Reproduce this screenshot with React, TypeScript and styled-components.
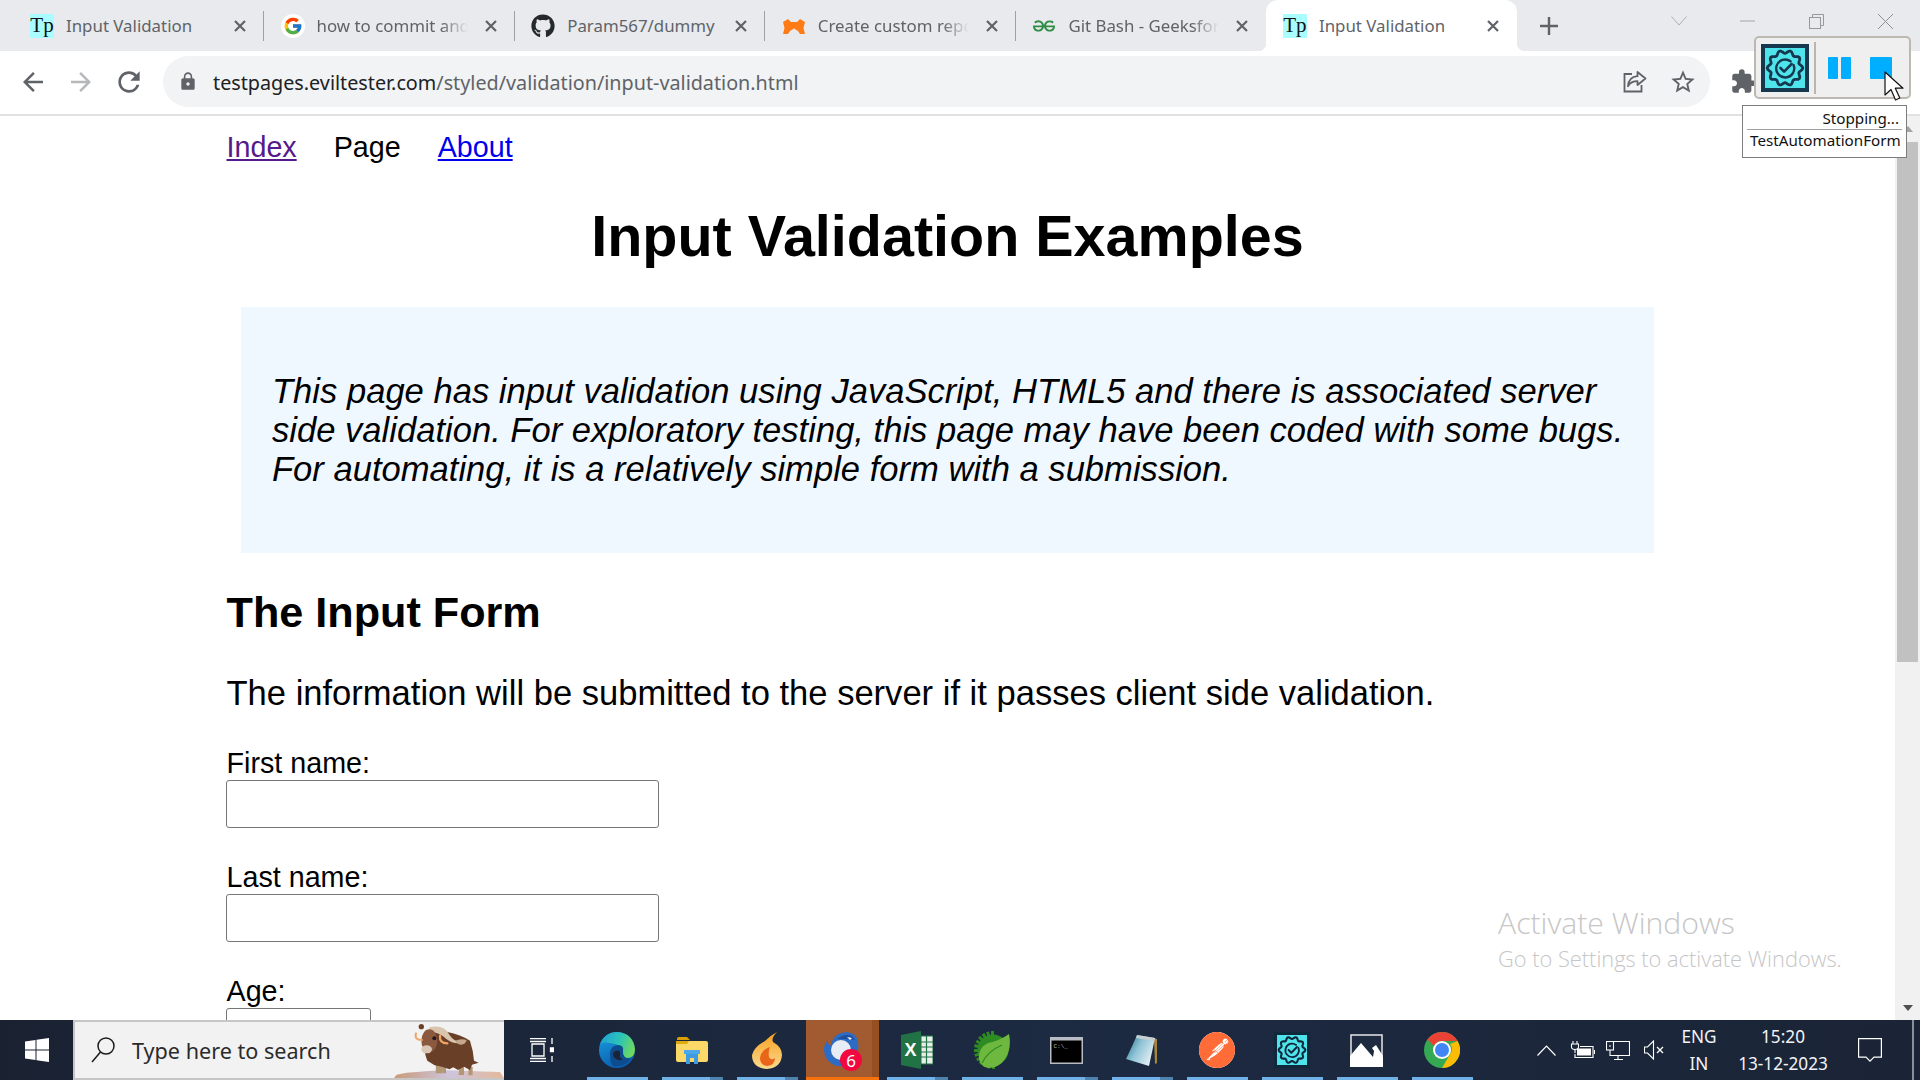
import React from 'react';
import styled, { createGlobalStyle } from 'styled-components';
import { MdArrowBack, MdArrowForward, MdRefresh, MdLock, MdExtension, MdStarBorder } from 'react-icons/md';
import { FcGoogle } from 'react-icons/fc';
import { FaGithub } from 'react-icons/fa';
import { SiGeeksforgeeks, SiPostman } from 'react-icons/si';

const GlobalStyle = createGlobalStyle`
  html, body {
    margin: 0;
    padding: 0;
    background: #fff;
  }
`;

const Screen = styled.div`
  position: relative;
  display: flex;
  flex-direction: column;
  width: 1920px;
  height: 1080px;
  overflow: hidden;
  font-family: "Noto Sans", "Liberation Sans", sans-serif;
`;

/* tab strip */
const TabStrip = styled.div`
  display: flex;
  flex: none;
  height: 51px;
  padding-left: 13.500px;
  background: #e8eaed;
`;

const Tab = styled.div<{ $active?: boolean; $sep?: boolean }>`
  position: relative;
  display: flex;
  align-items: center;
  box-sizing: border-box;
  flex: none;
  width: 250.600px;
  height: 51px;
  padding: 0 0 0 16.500px;
  background: ${(p) => (p.$active ? '#fff' : 'transparent')};
  border-radius: ${(p) => (p.$active ? '12px 12px 0 0' : '0')};

  &::after {
    content: '';
    display: ${(p) => (p.$sep ? 'block' : 'none')};
    position: absolute;
    right: 0;
    top: 11px;
    width: 1px;
    height: 30px;
    background: #9da1a6;
  }
`;

const Flare = styled.span<{ $side: 'left' | 'right' }>`
  position: absolute;
  bottom: 0;
  ${(p) => p.$side}: -8px;
  width: 8px;
  height: 8px;
  background: radial-gradient(
    circle at ${(p) => (p.$side === 'left' ? '0 0' : '100% 0')},
    transparent 8px,
    #fff 8.500px
  );
`;

const Favicon = styled.span`
  display: flex;
  align-items: center;
  justify-content: center;
  flex: none;
  width: 24px;
  height: 24px;
`;

const TpFavicon = styled(Favicon)`
  background: #a9fdff;
  color: #111;
  font-family: "Liberation Serif", serif;
  font-size: 21px;
  border-radius: 1px;
`;

const GoogleDisc = styled(Favicon)`
  background: #fff;
  border-radius: 50%;
`;

const TabTitle = styled.span<{ $fade?: boolean }>`
  flex: none;
  width: 151px;
  margin-left: 12px;
  overflow: hidden;
  white-space: nowrap;
  font-size: 16.850px;
  color: #5f6368;
  ${(p) => p.$fade && 'mask-image: linear-gradient(to right, #000 82%, transparent 100%);'}
`;

const TabClose = styled.span`
  display: flex;
  align-items: center;
  justify-content: center;
  flex: none;
  width: 20px;
  height: 20px;
  margin-left: 13px;
`;

const NewTab = styled.span`
  display: flex;
  align-items: center;
  justify-content: center;
  flex: none;
  width: 48px;
  height: 51px;
  margin-left: 8px;
`;

const WindowControls = styled.div`
  display: flex;
  margin-left: auto;
`;

const WindowButton = styled.span<{ $w?: number; $gap?: number }>`
  display: flex;
  align-items: center;
  justify-content: center;
  width: ${(p) => p.$w ?? 69}px;
  height: 42px;
  margin-right: ${(p) => p.$gap ?? 0}px;
`;

/* address bar */
const Toolbar = styled.div`
  display: flex;
  align-items: center;
  flex: none;
  box-sizing: border-box;
  height: 65px;
  padding: 0 0 2px 9px;
  background: #fff;
  border-bottom: 2px solid #e0e1e3;
`;

const ToolButton = styled.span<{ $color?: string }>`
  display: flex;
  align-items: center;
  justify-content: center;
  flex: none;
  width: 48px;
  height: 48px;
  color: ${(p) => p.$color ?? '#5f6368'};
`;

const Omnibox = styled.div`
  display: flex;
  align-items: center;
  flex: none;
  box-sizing: border-box;
  width: 1547px;
  height: 51px;
  margin: 0 9px 0 10px;
  padding: 0 3px 0 15px;
  background: #f1f3f4;
  border-radius: 26px;
`;

const LockSlot = styled.span`
  display: flex;
  justify-content: center;
  flex: none;
  width: 20px;
  color: #5f6368;
`;

const Url = styled.div`
  flex: 1;
  margin-left: 15px;
  padding-top: 2px;
  font-size: 19.750px;
  color: #5f6368;
  white-space: nowrap;

  b {
    font-weight: 400;
    color: #202124;
  }
`;

/* page */
const Viewport = styled.div`
  display: flex;
  flex: 1;
  min-height: 0;
`;

const PageScroll = styled.div`
  flex: 1;
  overflow: hidden;
  background: #fff;
  font-family: "Liberation Sans", Arial, sans-serif;
  font-size: 28.700px;
  color: #000;
`;

const Container = styled.div`
  width: 1442px;
  margin: 0 auto;
`;

const Nav = styled.nav`
  display: flex;
  gap: 37px;
  padding-top: 15px;
  line-height: 33px;
`;

const NavLink = styled.a<{ $visited?: boolean }>`
  color: ${(p) => (p.$visited ? '#551a8b' : '#0000ee')};
  text-decoration: underline;
`;

const Title = styled.h1`
  margin: 39px 0 0;
  font-size: 57.500px;
  line-height: 66px;
  font-weight: 700;
  text-align: center;
`;

const Intro = styled.div`
  box-sizing: border-box;
  height: 246px;
  margin: 38px 14.500px 0;
  padding: 65px 30px 0 31px;
  background: #f0f8ff;
  font-style: italic;
  font-size: 34.600px;
  line-height: 39px;
`;

const SectionTitle = styled.h2`
  margin: 34px 0 0;
  font-size: 43.200px;
  line-height: 50px;
  font-weight: 700;
`;

const Lead = styled.p`
  margin: 36px 0 34px;
  font-size: 34.550px;
  line-height: 40px;
`;

const Field = styled.div`
  margin-bottom: 33px;
`;

const Label = styled.label`
  display: block;
  line-height: 33px;
`;

const TextInput = styled.input<{ $w: number }>`
  display: block;
  box-sizing: border-box;
  width: ${(p) => p.$w}px;
  height: 48px;
  margin-left: -1px;
  padding: 0 4px;
  border: 1px solid #767676;
  border-radius: 3px;
  background: #fff;
  outline: 0;
`;

const Scrollbar = styled.div`
  position: relative;
  flex: none;
  display: flex;
  flex-direction: column;
  align-items: center;
  width: 25px;
  background: #f1f1f1;
`;

const ThumbGap = styled.div`
  height: 26px;
  display: flex;
  align-items: center;
`;

const Thumb = styled.div`
  width: 21px;
  height: 520px;
  background: #c1c1c1;
`;

const ScrollArrow = styled.span<{ $up?: boolean }>`
  width: 0;
  height: 0;
  border-left: 5.500px solid transparent;
  border-right: 5.500px solid transparent;
  ${(p) => (p.$up ? 'border-bottom: 6px solid #a3a3a3;' : 'border-top: 6px solid #505050;')}
`;

const ScrollSpacer = styled.div`
  flex: 1;
`;

const BottomArrow = styled.div`
  display: flex;
  align-items: center;
  height: 25px;
`;

/* watermark */
const Watermark = styled.div`
  position: absolute;
  left: 1498px;
  top: 903px;
  color: #c6c6c6;
  font-family: "Open Sans", "Noto Sans", sans-serif;
  font-weight: 300;
  pointer-events: none;
`;

const WatermarkTitle = styled.div`
  font-size: 30.200px;
  line-height: 40px;
`;

const WatermarkSub = styled.div`
  font-size: 21.800px;
  line-height: 32px;
`;

/* recorder overlay */
const RecorderBar = styled.div`
  position: absolute;
  left: 1754px;
  top: 36px;
  display: flex;
  align-items: center;
  box-sizing: border-box;
  width: 157px;
  height: 63px;
  padding-left: 5px;
  background: #efefef;
  border: 2px solid #bdb9b2;
  border-radius: 5px;
`;

const RecorderDivider = styled.span`
  width: 2px;
  height: 52px;
  margin: 0 12px 0 5px;
  background: #b9b6af;
`;

const PauseBar = styled.span`
  width: 10px;
  height: 22px;
  background: #00aeff;
  border-radius: 1px;

  & + & {
    margin-left: 3px;
  }
`;

const StopSquare = styled.span`
  width: 22px;
  height: 22px;
  margin-left: 19px;
  background: #00aeff;
  border-radius: 1px;
`;

const StatusTip = styled.div`
  position: absolute;
  left: 1742px;
  top: 105px;
  box-sizing: border-box;
  width: 165px;
  height: 53px;
  padding: 1px 4px 0;
  background: #fff;
  border: 1px solid #7d7d7d;
  font-size: 15.200px;
  color: #111;
  text-align: right;
`;

const StatusLine = styled.div<{ $rule?: boolean }>`
  line-height: 21px;
  padding: 0 3px;
  ${(p) => p.$rule && 'border-bottom: 1px solid #a0a0a0; line-height: 22px; height: 22px;'}
`;

const CursorSlot = styled.span`
  position: absolute;
  left: 1884px;
  top: 71px;
  display: block;
  line-height: 0;
`;

/* taskbar */
const Taskbar = styled.div`
  display: flex;
  align-items: stretch;
  flex: none;
  height: 60px;
  background: linear-gradient(to right, #1a2232, #1c2a42 55%, #1b2436);
  color: #fff;
`;

const StartSlot = styled.div`
  display: flex;
  align-items: center;
  justify-content: center;
  flex: none;
  width: 73px;
`;

const SearchBox = styled.div`
  display: flex;
  align-items: center;
  flex: none;
  box-sizing: border-box;
  width: 431px;
  padding-left: 16px;
  background: #f2f2f2;
  border: 2px solid #c6c6c6;
  border-right: 0;
  overflow: hidden;
`;

const SearchText = styled.span`
  margin-left: 17px;
  padding-top: 1px;
  font-size: 21.600px;
  color: #2b2b2b;
  white-space: nowrap;
`;

const Yak = styled.svg`
  flex: none;
  margin-left: auto;
  width: 110px;
  height: 56px;
`;

const TaskItem = styled.div<{ $active?: boolean }>`
  position: relative;
  display: flex;
  align-items: center;
  justify-content: center;
  flex: none;
  box-sizing: border-box;
  width: 75px;
  background: ${(p) =>
    p.$active
      ? 'linear-gradient(to right, transparent 2px, #a25b30 2px, #a25b30 68px, #964f20 68px)'
      : 'transparent'};
`;

const RunLine = styled.span<{ $active?: boolean; $stack?: boolean }>`
  position: absolute;
  bottom: 0;
  left: ${(p) => (p.$active ? '2px' : '8px')};
  right: ${(p) => (p.$active ? '0' : '6px')};
  height: 3px;
  background: ${(p) =>
    p.$active
      ? '#f7720c'
      : p.$stack
        ? 'linear-gradient(to right, #70b2e8 78%, #4f83ad 78%)'
        : '#70b2e8'};
`;

const BadgeCount = styled.span`
  position: absolute;
  left: 36px;
  top: 29px;
  display: flex;
  align-items: center;
  justify-content: center;
  width: 22px;
  height: 22px;
  border-radius: 50%;
  background: #f0083f;
  color: #fff;
  font-size: 17px;
`;

const PostmanDisc = styled.span`
  display: flex;
  border-radius: 50%;
  background: #fff;
  color: #ff6c37;
  line-height: 0;
`;

const Tray = styled.div`
  display: flex;
  align-items: center;
  margin-left: auto;
`;

const TrayIcon = styled.span<{ $w?: number }>`
  display: flex;
  align-items: center;
  justify-content: center;
  width: ${(p) => p.$w ?? 36}px;
`;

const TrayText = styled.div<{ $w: number }>`
  width: ${(p) => p.$w}px;
  font-size: 17.200px;
  line-height: 27px;
  text-align: center;
  color: #f1f3f6;
`;

const DesktopEdge = styled.span`
  align-self: stretch;
  width: 2px;
  margin: 0 6px 0 12px;
  background: #8a8f98;
`;

/* drawings */
const GearBadge = ({ size, border = '#16384f' }: { size: number; border?: string }) => {
  const pts: string[] = [];
  const n = 10;
  for (let i = 0; i < n * 8; i++) {
    const a = (i / (n * 8)) * Math.PI * 2;
    const r = 16.2 + 1.6 * Math.cos(a * n);
    pts.push(`${(24 + r * Math.cos(a)).toFixed(2)},${(24 + r * Math.sin(a)).toFixed(2)}`);
  }
  return (
    <svg width={size} height={size} viewBox="0 0 48 48" style={{ flex: 'none' }}>
      <rect width="48" height="48" fill={border} />
      <rect x="4" y="4" width="40" height="40" fill="#4fe3ec" />
      <polygon points={pts.join(' ')} fill="none" stroke={border} strokeWidth="2.8" strokeLinejoin="round" />
      <path d="M32.5 21a9 9 0 1 1-3-3.8" fill="none" stroke={border} strokeWidth="2.4" strokeLinecap="round" />
      <path d="M19.5 24l3.6 3.6 7.5-7.6" fill="none" stroke={border} strokeWidth="2.6" strokeLinecap="round" strokeLinejoin="round" />
    </svg>
  );
};

const CloseGlyph = ({ size = 12, color = '#5f6368', w = 2.2 }: { size?: number; color?: string; w?: number }) => (
  <svg width={size} height={size} viewBox="0 0 12 12">
    <path d="M1 1l10 10M11 1L1 11" stroke={color} strokeWidth={w} fill="none" />
  </svg>
);

const MaskFavicon = () => (
  <svg width="24" height="24" viewBox="0 0 24 24">
    <path
      d="M1 20l1.500-6L1 8l5-3 3 3h6l3-3 5 3-1.500 6L23 20h-5l-2-3-4-2.500L8 17l-2 3z"
      fill="#ff7b16"
    />
  </svg>
);

const ShareIcon = () => (
  <svg width="24" height="23" viewBox="0 0 24 23" fill="none" stroke="#5f6368" strokeWidth="1.8">
    <path d="M9 4H1.500v17.500h17V15" />
    <path d="M14.500 2l8 6.500-8 6.500v-3.800c-4.500 0-7.500 1.500-9.500 5 .3-5.500 3.500-9.500 9.500-10z" strokeLinejoin="round" />
  </svg>
);

const WinLogo = () => (
  <svg width="24" height="24" viewBox="0 0 24 24" fill="#fff">
    <path d="M0 3.400L10.500 2v9.500H0zM11.500 1.800L24 0v11.500H11.500zM0 12.500h10.500V22L0 20.600zM11.500 12.500H24V24l-12.500-1.800z" />
  </svg>
);

const SearchGlyph = () => (
  <svg width="24" height="26" viewBox="0 0 24 26" fill="none" stroke="#1c1c1c" strokeWidth="1.500">
    <circle cx="15" cy="9" r="8" />
    <path d="M9.500 15L1 25" />
  </svg>
);

const YakDrawing = () => (
  <Yak viewBox="12 6 330 168">
    <defs>
      <linearGradient id="yakGround" x1="0" x2="1" y1="0" y2="0">
        <stop offset="0" stopColor="#c79a78" />
        <stop offset="0.5" stopColor="#cfc4dc" />
        <stop offset="1" stopColor="#e4b89a" />
      </linearGradient>
    </defs>
    <path d="M12 174l8-10 30-6 30-2q70-8 140-4 60 2 110 4l12 18z" fill="url(#yakGround)" />
    <path d="M138 130h22l-3 30h-20zM158 130h10v30h-10zM208 140h14v25h-16zM236 140h12v26h-13z" fill="#b39876" />
    <path
      d="M100 50q30-36 72-14 40 8 68 26 10 30 12 60l14 6-20 6-6 16-18-10-18 10-14-8-12 6-22-8-22-4-22-14q-12-30-12-72z"
      fill="#6a3f27"
    />
    <path d="M118 22q44-10 60 22 18 28 48 18-26 18-58-6-20-18-50-22z" fill="#d9c4ae" />
    <path d="M196 62q16-8 34-2-4 14-16 14-12 0-18-12z" fill="#c4a78c" />
    <ellipse cx="118" cy="62" rx="24" ry="34" fill="#8b5a3e" />
    <ellipse cx="110" cy="88" rx="16" ry="12" fill="#dcc6b6" />
    <circle cx="94" cy="20" r="8" fill="#6a3f27" />
    <circle cx="133" cy="55" r="6" fill="#1f1b1f" />
    <path d="M78 40q-6 20 18 20" fill="none" stroke="#f0a468" strokeWidth="6" strokeLinecap="round" />
    <path d="M150 48q-2 22 22 22" fill="none" stroke="#f0a468" strokeWidth="7" strokeLinecap="round" />
  </Yak>
);

const TaskView = () => (
  <svg width="24" height="24" viewBox="0 0 24 24" fill="none" stroke="#fff" strokeWidth="1.300">
    <path d="M0 .7h16M0 23.300h16M2 6h12v12H2z" />
    <path d="M0 3.500h16M0 20.500h16" />
    <path d="M22 0v6M22 18v6" />
    <path d="M20.500 10h3v3.500h-3z" fill="#fff" />
  </svg>
);

const EdgeIcon = () => (
  <svg width="36" height="36" viewBox="0 0 36 36">
    <defs>
      <linearGradient id="edgeTop" x1="0" x2="1" y1="0.2" y2="0.5">
        <stop offset="0" stopColor="#1fa0d8" />
        <stop offset="0.55" stopColor="#2cc4b6" />
        <stop offset="1" stopColor="#6fd85f" />
      </linearGradient>
      <linearGradient id="edgeLow" x1="0" x2="0.5" y1="0" y2="1">
        <stop offset="0" stopColor="#1aa0e2" />
        <stop offset="1" stopColor="#0b5cad" />
      </linearGradient>
    </defs>
    <circle cx="18" cy="18" r="18" fill="url(#edgeLow)" />
    <path d="M1 12Q6 0 18 0q16 1 18 17 0 9-8 9-7 0-5-6 1-6-7-8-12-3-15 0z" fill="url(#edgeTop)" />
    <path d="M11 24q-1-10 8-11 6 0 5 6-1 7 8 8-8 9-18 7-3-4-3-10z" fill="#0d4d8f" />
    <path d="M14 22q1-4 5-3.500 3 .5 2 4-1 3 3 5-3 1.500-6 0-4-2-4-5.500z" fill="#1a2436" />
  </svg>
);

const FolderIcon = () => (
  <svg width="32" height="28" viewBox="0 0 32 28">
    <path d="M1 3q0-2 2-2h8l3 3h-13z" fill="#d9a006" />
    <path d="M0 5h30q2 0 2 2v17q0 2-2 2H2q-2 0-2-2z" fill="#fcd869" />
    <path d="M0 5h13l-2 3H0z" fill="#e2a90c" />
    <path d="M10 17h12v11h-4v-6h-4v6h-4z" fill="#3f9be0" />
    <path d="M8 14h16v4H8z" fill="#4aa8ea" />
  </svg>
);

const FlameIcon = () => (
  <svg width="30" height="37" viewBox="0 0 30 37">
    <defs>
      <linearGradient id="flameOuter" x1="0" x2="0" y1="0" y2="1">
        <stop offset="0" stopColor="#f7a01e" />
        <stop offset="1" stopColor="#fbd98e" />
      </linearGradient>
    </defs>
    <path d="M25 0q-6 3-12 9Q2 15 0 23q0 13 15 14 14-1 15-14 0-8-9-13-2-4 4-10z" fill="url(#flameOuter)" />
    <path d="M18 15q-9 3-10 11 0 7 7 8 8-1 8-8-4 3-6-1-1-5 1-10z" fill="#e8651a" />
  </svg>
);

const BirdIcon = () => (
  <svg width="38" height="38" viewBox="0 0 38 38">
    <path d="M8 14Q10 2 24 1q9 1 11 9 2 12-6 20-8 8-18 4Q1 29 1 19q0-6 4-10-1 5 3 5z" fill="#2d6cc5" />
    <path d="M14 8q8-6 15-3l3 4-9-1q-6 0-9 0z" fill="#1d4f9e" />
    <circle cx="18" cy="19" r="10" fill="#e8ecf4" />
    <path d="M24 6l5 1-2 2z" fill="#fff" />
  </svg>
);

const ExcelIcon = () => (
  <svg width="32" height="38" viewBox="0 0 32 38">
    <path d="M0 4l20-4v38L0 34z" fill="#217346" />
    <rect x="20" y="5" width="12" height="28" fill="#e8efe9" stroke="#217346" strokeWidth="1" />
    <path d="M20 11h12M20 16h12M20 21h12M20 26h12M25.500 5v28" stroke="#217346" strokeWidth="1.200" />
    <text x="9.500" y="25" fontSize="18" fontWeight="700" fontFamily="Liberation Sans, sans-serif" fill="#fff" textAnchor="middle">X</text>
  </svg>
);

const SpringIcon = () => {
  const teeth = Array.from({ length: 13 }, (_, i) => -180 + i * 15);
  return (
    <svg width="36" height="38" viewBox="0 0 36 38">
      {teeth.map((d) => (
        <rect key={d} x="17" y="0" width="3" height="6" fill="#2f8a1f" transform={`rotate(${d} 19 19)`} />
      ))}
      <circle cx="19" cy="19" r="15.500" fill="#2d8c22" />
      <path d="M35 3q3 14-4 25-6 9-17 9-8-2-9-9-1-11 9-16Q25 10 35 3z" fill="#6fb83f" />
      <path d="M8 32q6-12 20-18" fill="none" stroke="#2d8c22" strokeWidth="1.300" />
    </svg>
  );
};

const CmdIcon = () => (
  <svg width="33" height="27" viewBox="0 0 33 27">
    <rect width="33" height="27" fill="#b8bcc4" />
    <rect x="1.500" y="3.500" width="30" height="22" fill="#000" />
    <text x="3.500" y="11" fontSize="6" fontFamily="Liberation Mono, monospace" fill="#bbb">C:\_</text>
  </svg>
);

const NotepadIcon = () => (
  <svg width="33" height="33" viewBox="0 0 33 33">
    <defs>
      <linearGradient id="padFace" x1="0" x2="1" y1="0" y2="0.6">
        <stop offset="0" stopColor="#1f6a84" />
        <stop offset="0.5" stopColor="#8fc4d6" />
        <stop offset="1" stopColor="#e4f0f4" />
      </linearGradient>
    </defs>
    <path d="M29 4l3 1v24l-2 1z" fill="#a8863a" />
    <path d="M12 1l18 3-6 28L1 25Q6 15 12 1z" fill="url(#padFace)" />
    <path d="M12 1l18 3-1 3-18-3z" fill="#c6ced2" />
  </svg>
);

const PhotosIcon = () => (
  <svg width="33" height="33" viewBox="0 0 33 33">
    <rect x="1" y="1" width="31" height="31" fill="#1d2a40" stroke="#e8e8e8" strokeWidth="1.500" />
    <path d="M0 33V22L11 9l12 14 2-11 8 11v10z" fill="#fff" />
    <path d="M22 14l4-3 7 11-4 2z" fill="#fff" />
  </svg>
);

const ChromeIcon = () => (
  <svg width="36" height="36" viewBox="0 0 36 36">
    <circle cx="18" cy="18" r="18" fill="#34a853" />
    <path d="M18 0a18 18 0 0 1 15.600 9H18a9 9 0 0 0-8 5L3.500 7.500A18 18 0 0 1 18 0z" fill="#ea4335" />
    <path d="M33.600 9A18 18 0 0 1 18 36l7.500-13A9 9 0 0 0 26 12z" fill="#fbbc05" />
    <circle cx="18" cy="18" r="9" fill="#fff" />
    <circle cx="18" cy="18" r="7" fill="#4285f4" />
  </svg>
);

const BatteryIcon = () => (
  <svg width="25" height="18" viewBox="0 0 25 18" fill="none" stroke="#fff" strokeWidth="1.100">
    <path d="M3 0v3M7 0v3M1.500 3h7v3q0 2.500-3.500 2.500T1.500 6zM5 8.500V12" />
    <path d="M5 13v3.500h18v-11H10" />
    <rect x="7" y="7.500" width="14" height="7" fill="#fff" stroke="none" />
    <path d="M24.500 9v4" />
  </svg>
);

const NetworkIcon = () => (
  <svg width="24" height="19" viewBox="0 0 24 19" fill="none" stroke="#fff" strokeWidth="1.100">
    <path d="M5 .5h18.500v14H5M12 14.500V18M8 18.500h9" />
    <rect x=".5" y=".5" width="7" height="8.500" />
    <path d="M4 9v5.500h2" />
    <path d="M3 5h2" />
  </svg>
);

const SpeakerIcon = () => (
  <svg width="21" height="20" viewBox="0 0 21 20" fill="none" stroke="#fff" strokeWidth="1.100">
    <path d="M.5 7v6h3l6 6V1l-6 6z" />
    <path d="M13 7l6 6M19 7l-6 6" strokeWidth="1.300" />
  </svg>
);

const TrayChevron = () => (
  <svg width="19" height="11" viewBox="0 0 19 11" fill="none" stroke="#fff" strokeWidth="1.200">
    <path d="M.5 10.500l9-9.500 9 9.500" />
  </svg>
);

const NotifyIcon = () => (
  <svg width="24" height="24" viewBox="0 0 24 24" fill="none" stroke="#fff" strokeWidth="1.200">
    <path d="M.6.600h22.800v18.500H16l-4 4-4-4H.6z" />
  </svg>
);

const Cursor = () => (
  <svg width="20" height="31" viewBox="0 0 20 31">
    <path d="M1 1v23l6-5.500 4.500 10.500 4.300-2-4.500-9.800H19z" fill="#fff" stroke="#111" strokeWidth="1.200" strokeLinejoin="round" />
  </svg>
);

const tabs = [
  { title: 'Input Validation', icon: <TpFavicon>Tp</TpFavicon>, sep: true },
  { title: 'how to commit and push to github', icon: <GoogleDisc><FcGoogle size={20} /></GoogleDisc>, sep: true, fade: true },
  { title: 'Param567/dummy', icon: <Favicon><FaGithub size={24} color="#24292e" /></Favicon>, sep: true },
  { title: 'Create custom reports in TestNG', icon: <Favicon><MaskFavicon /></Favicon>, sep: true, fade: true },
  { title: 'Git Bash - GeeksforGeeks', icon: <Favicon><SiGeeksforgeeks size={22} color="#2f8d46" /></Favicon>, fade: true },
  { title: 'Input Validation', icon: <TpFavicon>Tp</TpFavicon>, active: true },
];

const taskItems: { icon: React.ReactNode; stack?: boolean; active?: boolean; badge?: string; noLine?: boolean }[] = [
  { icon: <TaskView />, noLine: true },
  { icon: <EdgeIcon /> },
  { icon: <FolderIcon />, stack: true },
  { icon: <FlameIcon />, stack: true },
  { icon: <BirdIcon />, active: true, badge: '6' },
  { icon: <ExcelIcon />, stack: true },
  { icon: <SpringIcon /> },
  { icon: <CmdIcon />, stack: true },
  { icon: <NotepadIcon />, stack: true },
  { icon: <PostmanDisc><SiPostman size={36} /></PostmanDisc> },
  { icon: <GearBadge size={36} border="#10283c" /> },
  { icon: <PhotosIcon /> },
  { icon: <ChromeIcon /> },
];

const App: React.FC = () => {
  return (
    <Screen>
      <GlobalStyle />
      <TabStrip>
        {tabs.map((t, i) => (
          <Tab key={i} $active={t.active} $sep={t.sep}>
            {t.active && <Flare $side="left" />}
            {t.active && <Flare $side="right" />}
            {t.icon}
            <TabTitle $fade={t.fade}>{t.title}</TabTitle>
            <TabClose><CloseGlyph /></TabClose>
          </Tab>
        ))}
        <NewTab>
          <svg width="18" height="18" viewBox="0 0 18 18">
            <path d="M9 0v18M0 9h18" stroke="#5f6368" strokeWidth="2.400" />
          </svg>
        </NewTab>
        <WindowControls>
          <WindowButton $w={60} $gap={4}>
            <svg width="16" height="10" viewBox="0 0 16 10" fill="none" stroke="#aeb0b4" strokeWidth="1">
              <path d="M.5.500L8 9l7.500-8.500" />
            </svg>
          </WindowButton>
          <WindowButton>
            <svg width="15" height="2" viewBox="0 0 15 2"><path d="M0 1h15" stroke="#a2a4a8" strokeWidth="1" /></svg>
          </WindowButton>
          <WindowButton>
            <svg width="15" height="15" viewBox="0 0 15 15" fill="none" stroke="#96989c" strokeWidth="1">
              <rect x=".5" y="3.500" width="11" height="11" />
              <path d="M3.500 3.500v-3h11v11h-3" />
            </svg>
          </WindowButton>
          <WindowButton>
            <svg width="15" height="15" viewBox="0 0 15 15"><path d="M0 0l15 15M15 0L0 15" stroke="#8e9094" strokeWidth="1" /></svg>
          </WindowButton>
        </WindowControls>
      </TabStrip>

      <Toolbar>
        <ToolButton><MdArrowBack size={30} /></ToolButton>
        <ToolButton $color="#b6b8bb"><MdArrowForward size={30} /></ToolButton>
        <ToolButton><MdRefresh size={32} /></ToolButton>
        <Omnibox>
          <LockSlot><MdLock size={21} /></LockSlot>
          <Url><b>testpages.eviltester.com</b>/styled/validation/input-validation.html</Url>
          <ToolButton><ShareIcon /></ToolButton>
          <ToolButton><MdStarBorder size={28} /></ToolButton>
        </Omnibox>
        <ToolButton><MdExtension size={27} /></ToolButton>
      </Toolbar>

      <Viewport>
        <PageScroll>
          <Container>
            <Nav>
              <NavLink href="#" $visited>Index</NavLink>
              <span>Page</span>
              <NavLink href="#">About</NavLink>
            </Nav>
            <Title>Input Validation Examples</Title>
            <Intro>
              This page has input validation using JavaScript, HTML5 and there is associated server side validation. For
              exploratory testing, this page may have been coded with some bugs. For automating, it is a relatively
              simple form with a submission.
            </Intro>
            <SectionTitle>The Input Form</SectionTitle>
            <Lead>The information will be submitted to the server if it passes client side validation.</Lead>
            <Field>
              <Label>First name:</Label>
              <TextInput $w={433} />
            </Field>
            <Field>
              <Label>Last name:</Label>
              <TextInput $w={433} />
            </Field>
            <Field>
              <Label>Age:</Label>
              <TextInput $w={145} />
            </Field>
          </Container>
        </PageScroll>
        <Scrollbar>
          <ThumbGap><ScrollArrow $up /></ThumbGap>
          <Thumb />
          <ScrollSpacer />
          <BottomArrow><ScrollArrow /></BottomArrow>
        </Scrollbar>
      </Viewport>

      <Taskbar>
        <StartSlot><WinLogo /></StartSlot>
        <SearchBox>
          <SearchGlyph />
          <SearchText>Type here to search</SearchText>
          <YakDrawing />
        </SearchBox>
        {taskItems.map((item, i) => (
          <TaskItem key={i} $active={item.active}>
            {item.icon}
            {item.badge && <BadgeCount>{item.badge}</BadgeCount>}
            {!item.noLine && <RunLine $active={item.active} $stack={item.stack} />}
          </TaskItem>
        ))}
        <Tray>
          <TrayIcon><TrayChevron /></TrayIcon>
          <TrayIcon><BatteryIcon /></TrayIcon>
          <TrayIcon><NetworkIcon /></TrayIcon>
          <TrayIcon><SpeakerIcon /></TrayIcon>
          <TrayText $w={54}>ENG<br />IN</TrayText>
          <TrayText $w={114}>15:20<br />13-12-2023</TrayText>
          <TrayIcon $w={60}><NotifyIcon /></TrayIcon>
          <DesktopEdge />
        </Tray>
      </Taskbar>

      <Watermark>
        <WatermarkTitle>Activate Windows</WatermarkTitle>
        <WatermarkSub>Go to Settings to activate Windows.</WatermarkSub>
      </Watermark>

      <RecorderBar>
        <GearBadge size={48} />
        <RecorderDivider />
        <PauseBar />
        <PauseBar />
        <StopSquare />
      </RecorderBar>
      <StatusTip>
        <StatusLine $rule>Stopping...</StatusLine>
        <StatusLine>TestAutomationForm</StatusLine>
      </StatusTip>
      <CursorSlot><Cursor /></CursorSlot>
    </Screen>
  );
};

export default App;
